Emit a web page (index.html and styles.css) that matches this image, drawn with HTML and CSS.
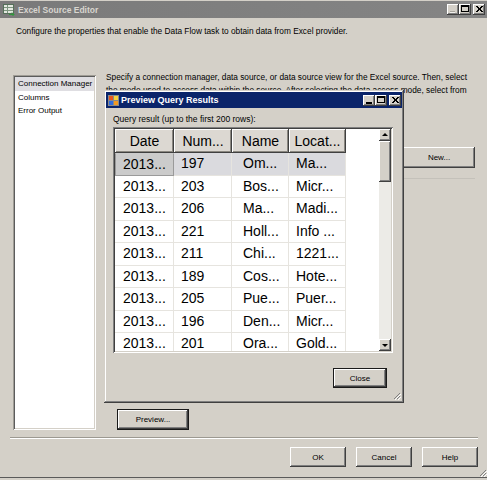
FILE: index.html
```html
<!DOCTYPE html>
<html lang="en">
<head>
  <meta charset="UTF-8">
  <title>Excel Source Editor</title>
  <link rel="stylesheet" href="styles.css">
</head>
<body>
  <div class="window">
    <!-- Main caption (inactive) -->
    <div class="titlebar">
      <svg class="cap-icon" width="12" height="12" viewBox="0 0 12 12">
        <rect x="0.5" y="0.5" width="10" height="9" fill="#e3e8e0" stroke="#56705a"/>
        <path d="M1 3.5h9M1 6.5h9M4.5 1v8" stroke="#7d957f"/>
        <path d="M6 10.5h5M9 8.5l2 2-2 2" stroke="#2f9a3a" fill="none"/>
      </svg>
      <span class="cap-title">Excel Source Editor</span>
      <div class="cap-btns">
        <div class="cap-btn">
          <svg width="12" height="11"><rect x="3" y="7" width="5" height="2" fill="#f2f1ee"/><rect x="3" y="7" width="5" height="1" fill="#a8a59e"/></svg>
        </div>
        <div class="cap-btn">
          <svg width="12" height="11"><rect x="2.5" y="1.5" width="7" height="6" fill="none" stroke="#000"/><rect x="2" y="1" width="8" height="2" fill="#000"/></svg>
        </div>
        <div class="cap-btn close">
          <svg width="12" height="11"><path d="M3 2l6 6M4 2l6 6M9 2l-6 6M10 2l-6 6" stroke="#000"/></svg>
        </div>
      </div>
    </div>

    <p class="desc">Configure the properties that enable the Data Flow task to obtain data from Excel provider.</p>

    <div class="main">
      <div class="navlist">
        <div class="nav-item sel">Connection Manager</div>
        <div class="nav-item">Columns</div>
        <div class="nav-item">Error Output</div>
      </div>
      <div class="pane">
        <p class="specify">Specify a connection manager, data source, or data source view for the Excel source. Then, select<br>the mode used to access data within the source. After selecting the data access mode, select from</p>
        <div class="new-row">
          <button class="btn new-btn">New...</button>
        </div>
        <div class="faint-line"></div>
        <button class="btn def preview-btn">Preview...</button>
      </div>
    </div>

    <div class="sep"></div>

    <div class="footer">
      <button class="btn">OK</button>
      <button class="btn">Cancel</button>
      <button class="btn">Help</button>
    </div>
    <svg class="grip main-grip" width="8" height="8" viewBox="0 0 8 8">
      <path d="M7 1L1 7M7 4L4 7M7 7L7 7" stroke="#808080"/>
      <path d="M8 2L2 8M8 5L5 8" stroke="#fff"/>
    </svg>

    <!-- Preview Query Results dialog, on top of the editor -->
    <div class="dialog">
      <div class="dlg-title">
        <svg class="dlg-icon" width="11" height="11" viewBox="0 0 11 11">
          <rect x="0" y="0" width="11" height="11" fill="#8a8a8a"/>
          <rect x="1" y="1" width="4" height="4" fill="#e8561c"/>
          <rect x="6" y="1" width="4" height="4" fill="#f7d23a"/>
          <rect x="1" y="6" width="4" height="4" fill="#2f6ce0"/>
          <rect x="6" y="6" width="4" height="4" fill="#f29a22"/>
        </svg>
        <span class="dlg-caption">Preview Query Results</span>
        <div class="cap-btns">
          <div class="cap-btn">
            <svg width="12" height="11"><rect x="3" y="7" width="6" height="2" fill="#000"/></svg>
          </div>
          <div class="cap-btn">
            <svg width="12" height="11"><rect x="2.5" y="1.5" width="7" height="6" fill="none" stroke="#000"/><rect x="2" y="1" width="8" height="2" fill="#000"/></svg>
          </div>
          <div class="cap-btn close">
            <svg width="12" height="11"><path d="M3 2l6 6M4 2l6 6M9 2l-6 6M10 2l-6 6" stroke="#000"/></svg>
          </div>
        </div>
      </div>

      <div class="dlg-body">
        <p class="qlabel">Query result (up to the first 200 rows):</p>
        <div class="grid">
          <div class="grid-main">
            <div class="grow head">
              <div class="hcell c1">Date</div>
              <div class="hcell c2">Num...</div>
              <div class="hcell c3">Name</div>
              <div class="hcell c4">Locat...</div>
            </div>
            <div class="grow sel">
              <div class="cell c1 focus">2013...</div><div class="cell c2">197</div><div class="cell c3">Om...</div><div class="cell c4">Ma...</div>
            </div>
            <div class="grow">
              <div class="cell c1">2013...</div><div class="cell c2">203</div><div class="cell c3">Bos...</div><div class="cell c4">Micr...</div>
            </div>
            <div class="grow">
              <div class="cell c1">2013...</div><div class="cell c2">206</div><div class="cell c3">Ma...</div><div class="cell c4">Madi...</div>
            </div>
            <div class="grow">
              <div class="cell c1">2013...</div><div class="cell c2">221</div><div class="cell c3">Holl...</div><div class="cell c4">Info ...</div>
            </div>
            <div class="grow">
              <div class="cell c1">2013...</div><div class="cell c2">211</div><div class="cell c3">Chi...</div><div class="cell c4">1221...</div>
            </div>
            <div class="grow">
              <div class="cell c1">2013...</div><div class="cell c2">189</div><div class="cell c3">Cos...</div><div class="cell c4">Hote...</div>
            </div>
            <div class="grow">
              <div class="cell c1">2013...</div><div class="cell c2">205</div><div class="cell c3">Pue...</div><div class="cell c4">Puer...</div>
            </div>
            <div class="grow">
              <div class="cell c1">2013...</div><div class="cell c2">196</div><div class="cell c3">Den...</div><div class="cell c4">Micr...</div>
            </div>
            <div class="grow">
              <div class="cell c1">2013...</div><div class="cell c2">201</div><div class="cell c3">Ora...</div><div class="cell c4">Gold...</div>
            </div>
          </div>
          <div class="vscroll">
            <div class="sb-btn">
              <svg width="12" height="12"><path d="M3 7h6L6 4z" fill="#000"/></svg>
            </div>
            <div class="sb-thumb"></div>
            <div class="sb-track"></div>
            <div class="sb-btn">
              <svg width="12" height="12"><path d="M3 5h6L6 8z" fill="#000"/></svg>
            </div>
          </div>
        </div>
        <div class="dlg-foot">
          <button class="btn def close-btn">Close</button>
        </div>
      </div>
      <svg class="grip dlg-grip" width="8" height="8" viewBox="0 0 8 8">
        <path d="M7 1L1 7M7 4L4 7" stroke="#808080"/>
        <path d="M8 2L2 8M8 5L5 8" stroke="#fff"/>
      </svg>
    </div>
  </div>
</body>
</html>
```

FILE: styles.css
```css
body {
  margin: 0;
  font-family: "Liberation Sans", Arial, sans-serif;
  font-size: 8px;
  color: #000;
}
p {
  margin: 0;
}
.window {
  position: relative;
  width: 487px;
  height: 480px;
  box-sizing: border-box;
  padding-top: 1px;
  background: #d4d0c8;
  box-shadow: inset 0 -2px #d4d0c8, inset 0 -3px #5a5a5a;
  overflow: hidden;
}

/* caption bars */
.titlebar {
  height: 17px;
  display: flex;
  align-items: center;
  padding: 0 2px 0 3px;
  background: linear-gradient(to right, #7a7a7a, #858585);
}
.cap-icon {
  margin-right: 3px;
}
.cap-title {
  flex: 1;
  font-weight: bold;
  font-size: 8.5px;
  color: #d8d5cf;
}
.cap-btns {
  display: flex;
}
.cap-btn {
  width: 12px;
  height: 11px;
  background: #d4d0c8;
  box-shadow: inset -1px -1px #404040, inset 1px 1px #fff, inset -2px -2px #808080;
}
.cap-btn svg {
  display: block;
}
.cap-btn.close {
  margin-left: 2px;
}

.desc {
  margin: 7px 0 0 16px;
  line-height: 12px;
  font-size: 8.3px;
  white-space: nowrap;
}

/* editor body */
.main {
  display: flex;
  height: 357px;
  margin: 36px 0 0 13px;
}
.navlist {
  width: 83px;
  height: 355px;
  margin-top: 2px;
  box-sizing: border-box;
  padding: 2px;
  background: #fff;
  box-shadow: inset 1px 1px #a09d96, inset -1px -1px #fff, inset 2px 2px #5c5c5c, inset -2px -2px #d4d0c8;
}
.nav-item {
  height: 13.5px;
  line-height: 13.5px;
  padding-left: 3px;
  white-space: nowrap;
}
.nav-item.sel {
  background: #dfdee2;
}
.pane {
  flex: 1;
  display: flex;
  flex-direction: column;
  margin: 0 9px 0 10px;
}
.specify {
  margin-top: -2px;
  line-height: 12.5px;
  font-size: 8.3px;
  white-space: nowrap;
}
.new-row {
  display: flex;
  justify-content: flex-end;
  margin: 51px 3px 0 0;
}
.faint-line {
  margin: 10px 3px 0 250px;
  border-top: 1px solid #c4c1ba;
}

.btn {
  display: flex;
  align-items: center;
  justify-content: center;
  padding: 0;
  border: none;
  font-family: "Liberation Sans", Arial, sans-serif;
  font-size: 8px;
  color: #000;
  background: #d4d0c8;
  box-shadow: inset -1px -1px #404040, inset 1px 1px #fff, inset -2px -2px #808080;
  width: 56px;
  height: 20px;
}
.btn.def {
  box-shadow: inset 0 0 0 1px #1a1a1a, inset -2px -2px #404040, inset 2px 2px #fff, inset -3px -3px #808080;
}
.new-btn {
  width: 72px;
  height: 21px;
}
.preview-btn {
  margin: auto 0 0 11px;
  width: 72px;
  height: 21px;
}

.sep {
  margin: 7px 9px 0 10px;
  border-top: 1px solid #9c9991;
  border-bottom: 1px solid #fff;
}
.footer {
  display: flex;
  justify-content: flex-end;
  gap: 10px;
  margin: 8px 9px 0 0;
}

.grip {
  position: absolute;
  display: block;
}
.main-grip {
  right: 0;
  bottom: 3px;
}

/* Preview Query Results dialog */
.dialog {
  position: absolute;
  left: 104px;
  top: 90px;
  width: 300px;
  height: 313px;
  box-sizing: border-box;
  padding: 2px;
  background: #d4d0c8;
  box-shadow: inset -1px -1px #404040, inset 1px 1px #d4d0c8, inset -2px -2px #808080, inset 2px 2px #fff;
}
.dlg-title {
  height: 16px;
  display: flex;
  align-items: center;
  padding: 0 1px 0 2px;
  background: #0a246a;
}
.dlg-icon {
  margin-right: 2px;
}
.dlg-caption {
  flex: 1;
  font-weight: bold;
  font-size: 9px;
  color: #fff;
}
.dlg-body {
  padding: 0 8px 0 7px;
}
.qlabel {
  margin-top: 5px;
  line-height: 12px;
  font-size: 8.5px;
}
.grid {
  display: flex;
  width: 280px;
  height: 226px;
  margin-top: 2px;
  box-sizing: border-box;
  padding: 2px;
  background: #fff;
  box-shadow: inset 1px 1px #808080, inset -1px -1px #fff, inset 2px 2px #404040, inset -2px -2px #d4d0c8;
}
.grid-main {
  width: 264px;
  overflow: hidden;
}
.grow {
  display: flex;
  height: 22.5px;
}
.grow.head {
  height: 24px;
}
.hcell, .cell {
  box-sizing: border-box;
  font-size: 14px;
  white-space: nowrap;
}
.c1 { width: 59px; }
.c2 { width: 58px; }
.c3 { width: 57px; }
.c4 { width: 57px; }
.hcell {
  line-height: 24px;
  text-align: center;
  background: #dcd8d2;
  box-shadow: inset -1px -1px #404040, inset 1px 1px #fff, inset -2px -2px #8a8780;
}
.cell {
  line-height: 21.5px;
  padding-left: 7px;
  border-right: 1px solid #e6e4df;
  border-bottom: 1px solid #e6e4df;
}
.cell.c1 {
  padding-left: 8px;
}
.cell.c3 {
  padding-left: 11px;
}
.grow.sel .cell {
  background: #dadade;
}
.grow.sel .cell.focus {
  background: #cbcbcb;
  border: 1px solid #9a9a9a;
  border-top-color: #cbcbcb;
  line-height: 20.5px;
  padding-left: 7px;
}
.vscroll {
  width: 12px;
  display: flex;
  flex-direction: column;
  background: #ecebe7;
}
.sb-btn, .sb-thumb {
  background: #d4d0c8;
  box-shadow: inset -1px -1px #404040, inset 1px 1px #fff, inset -2px -2px #808080;
}
.sb-btn {
  height: 12px;
}
.sb-btn svg {
  display: block;
}
.sb-thumb {
  height: 41px;
}
.sb-track {
  flex: 1;
}
.dlg-foot {
  display: flex;
  justify-content: flex-end;
  margin: 15px 7px 0 0;
}
.close-btn {
  width: 54px;
  height: 20px;
}
.dlg-grip {
  right: 3px;
  bottom: 3px;
}
```
